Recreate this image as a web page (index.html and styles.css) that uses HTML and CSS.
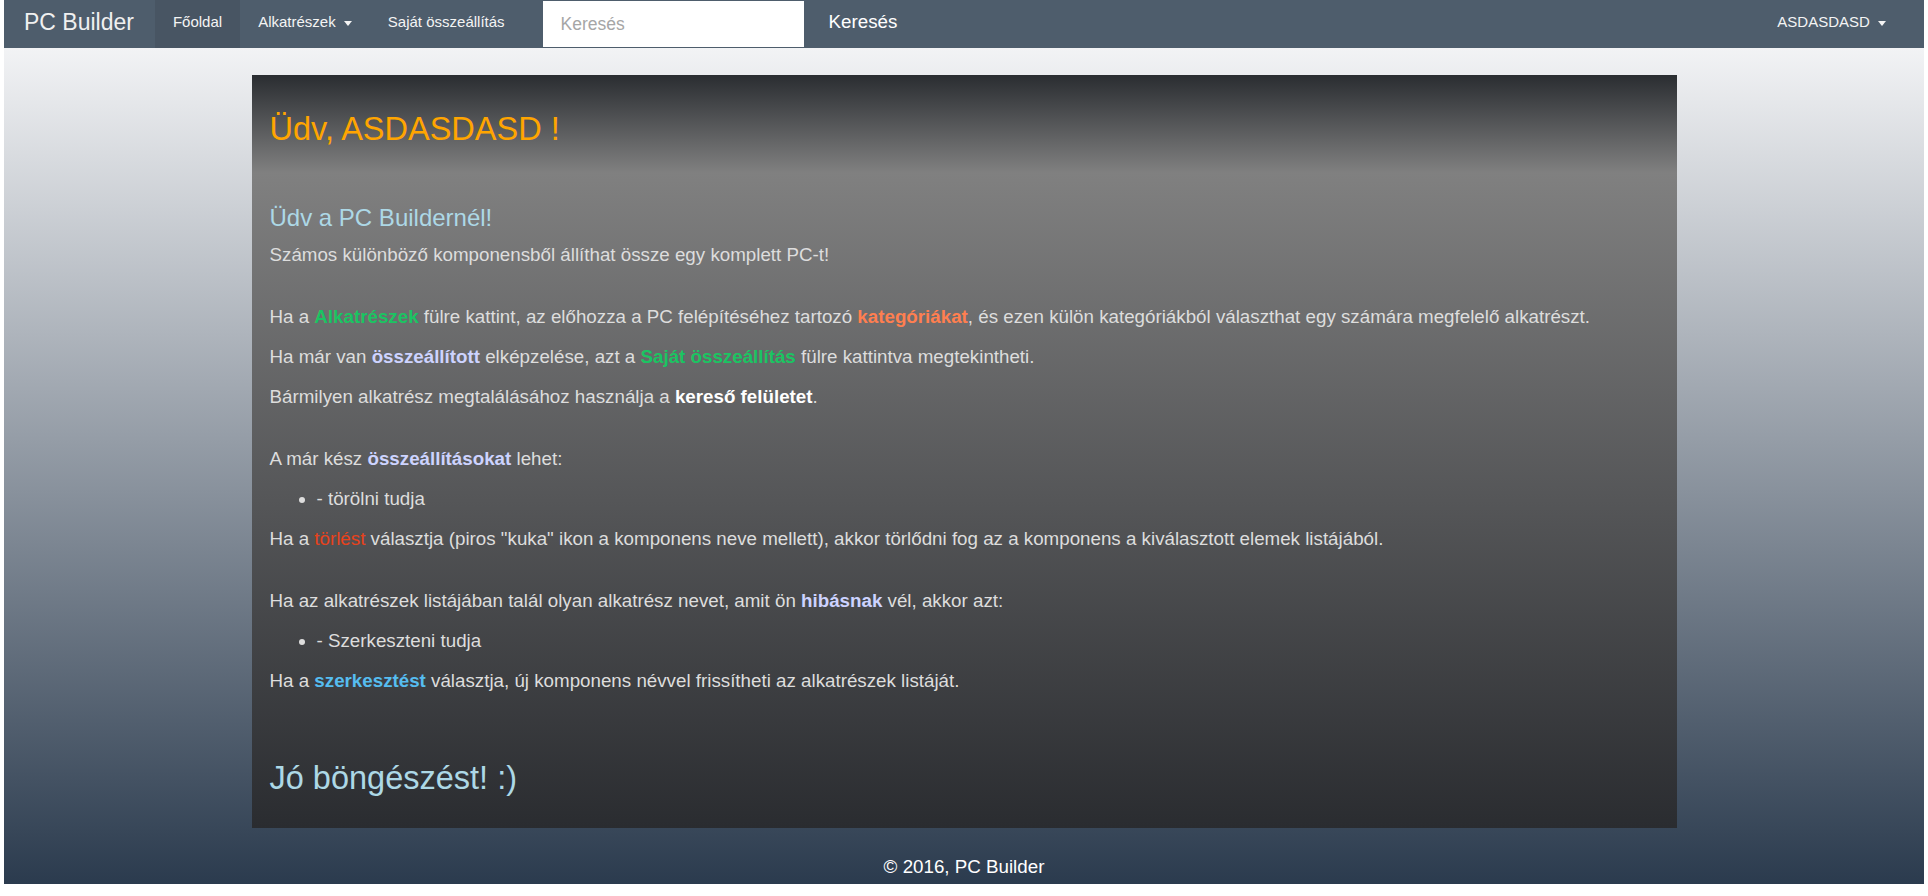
FILE: index.html
```html
<!DOCTYPE html>
<html lang="hu">
<head>
<meta charset="utf-8">
<title>PC Builder</title>
<link rel="stylesheet" href="styles.css">
</head>
<body>
<div class="page">
  <nav class="navbar">
    <a class="brand" href="#">PC Builder</a>
    <ul class="nav">
      <li class="nav-item active"><a href="#">Főoldal</a></li>
      <li class="nav-item"><a href="#">Alkatrészek <span class="caret"></span></a></li>
      <li class="nav-item"><a href="#">Saját összeállítás</a></li>
    </ul>
    <form class="search">
      <input class="search-input" type="text" placeholder="Keresés">
      <button class="search-btn" type="button">Keresés</button>
    </form>
    <ul class="nav nav-right">
      <li class="nav-item"><a href="#">ASDASDASD <span class="caret"></span></a></li>
    </ul>
  </nav>

  <main class="panel">
    <h1 class="greeting">Üdv, ASDASDASD !</h1>
    <h3 class="subtitle">Üdv a PC Buildernél!</h3>
    <p>Számos különböző komponensből állíthat össze egy komplett PC-t!</p>

    <section class="block">
      <p>Ha a <b class="green">Alkatrészek</b> fülre kattint, az előhozza a PC felépítéséhez tartozó <b class="coral">kategóriákat</b>, és ezen külön kategóriákból választhat egy számára megfelelő alkatrészt.</p>
      <p>Ha már van <b class="lav">összeállított</b> elképzelése, azt a <b class="green">Saját összeállítás</b> fülre kattintva megtekintheti.</p>
      <p>Bármilyen alkatrész megtalálásához használja a <b class="white">kereső felületet</b>.</p>
    </section>

    <section class="block">
      <p>A már kész <b class="lav">összeállításokat</b> lehet:</p>
      <ul class="list">
        <li>- törölni tudja</li>
      </ul>
      <p>Ha a <span class="red">törlést</span> választja (piros "kuka" ikon a komponens neve mellett), akkor törlődni fog az a komponens a kiválasztott elemek listájából.</p>
    </section>

    <section class="block">
      <p>Ha az alkatrészek listájában talál olyan alkatrész nevet, amit ön <b class="lav">hibásnak</b> vél, akkor azt:</p>
      <ul class="list">
        <li>- Szerkeszteni tudja</li>
      </ul>
      <p>Ha a <b class="cyan">szerkesztést</b> választja, új komponens névvel frissítheti az alkatrészek listáját.</p>
    </section>

    <h2 class="farewell">Jó böngészést! :)</h2>
  </main>

  <footer class="footer">© 2016, PC Builder</footer>
</div>
</body>
</html>
```
FILE: styles.css
```css
html, body {
  margin: 0;
  padding: 0;
  background: #ffffff;
}

body {
  font-family: "Liberation Sans", Arial, sans-serif;
  color: #dddddd;
}

.page {
  margin: 0 4px;
  height: 884px;
  display: flex;
  flex-direction: column;
  background: linear-gradient(to bottom, #f2f3f5 48px, #2b3b4e 100%);
}

/* ---------- navbar ---------- */
.navbar {
  height: 48px;
  flex: none;
  display: flex;
  align-items: flex-start;
  background: #4e5d6c;
}

.brand {
  display: block;
  padding: 0 21px 0 20px;
  line-height: 45px;
  font-size: 23px;
  color: #f0f0f0;
  text-decoration: none;
}

.nav {
  display: flex;
  list-style: none;
  margin: 0;
  padding: 0;
}

.nav-item a {
  display: block;
  padding: 0 18px;
  line-height: 44px;
  height: 48px;
  font-size: 15px;
  color: #f4f4f4;
  text-decoration: none;
}

.nav-item.active a {
  background: #485563;
}

.caret {
  display: inline-block;
  width: 0;
  height: 0;
  margin-left: 4px;
  vertical-align: middle;
  border-top: 5px solid #f4f4f4;
  border-left: 4px solid transparent;
  border-right: 4px solid transparent;
}

.search {
  display: flex;
  align-items: flex-start;
  margin: 0 0 0 20px;
}

.search-input {
  box-sizing: border-box;
  width: 261px;
  height: 46px;
  margin-top: 1px;
  border: 0;
  padding: 0 18px;
  font-family: "Liberation Sans", Arial, sans-serif;
  font-size: 17.5px;
  color: #333333;
  background: #ffffff;
  outline: none;
}

.search-input::placeholder {
  color: #a6a6a6;
}

.search-btn {
  height: 44px;
  padding: 0 23px 0 25px;
  border: 0;
  background: transparent;
  color: #ffffff;
  font-family: "Liberation Sans", Arial, sans-serif;
  font-size: 18.75px;
  line-height: 44px;
}

.nav-right {
  margin-left: auto;
  margin-right: 20px;
}

/* ---------- panel ---------- */
.panel {
  box-sizing: border-box;
  width: 1425px;
  margin: 27px auto 0;
  padding: 36px 18px 32px;
  background: linear-gradient(to bottom, #2a2d31 0%, #808080 13%, #2a2c30 100%);
  font-size: 18.75px;
  line-height: 27px;
}

.greeting {
  margin: 0 0 57px;
  font-size: 32.5px;
  line-height: 36px;
  font-weight: normal;
  color: #ffa500;
}

.subtitle {
  margin: 0 0 10px;
  font-size: 24px;
  line-height: 27px;
  font-weight: normal;
  color: #add8e6;
}

.panel p {
  margin: 0 0 13px;
}

.block {
  margin-top: 35px;
}

.list {
  margin: 0 0 13px;
  padding-left: 47px;
}

.list li {
  line-height: 27px;
}

.farewell {
  margin: 66px 0 0;
  font-size: 32.5px;
  line-height: 36px;
  font-weight: normal;
  color: #add8e6;
}

.green { color: #1bc462; }
.coral { color: #ff7f50; }
.lav { color: #cdd3ff; }
.white { color: #ffffff; }
.red { color: #e8421c; }
.cyan { color: #56bdf0; }

/* ---------- footer ---------- */
.footer {
  margin-top: auto;
  padding: 0 0 4px;
  text-align: center;
  font-size: 18.75px;
  line-height: 27px;
  color: #ffffff;
}
```
